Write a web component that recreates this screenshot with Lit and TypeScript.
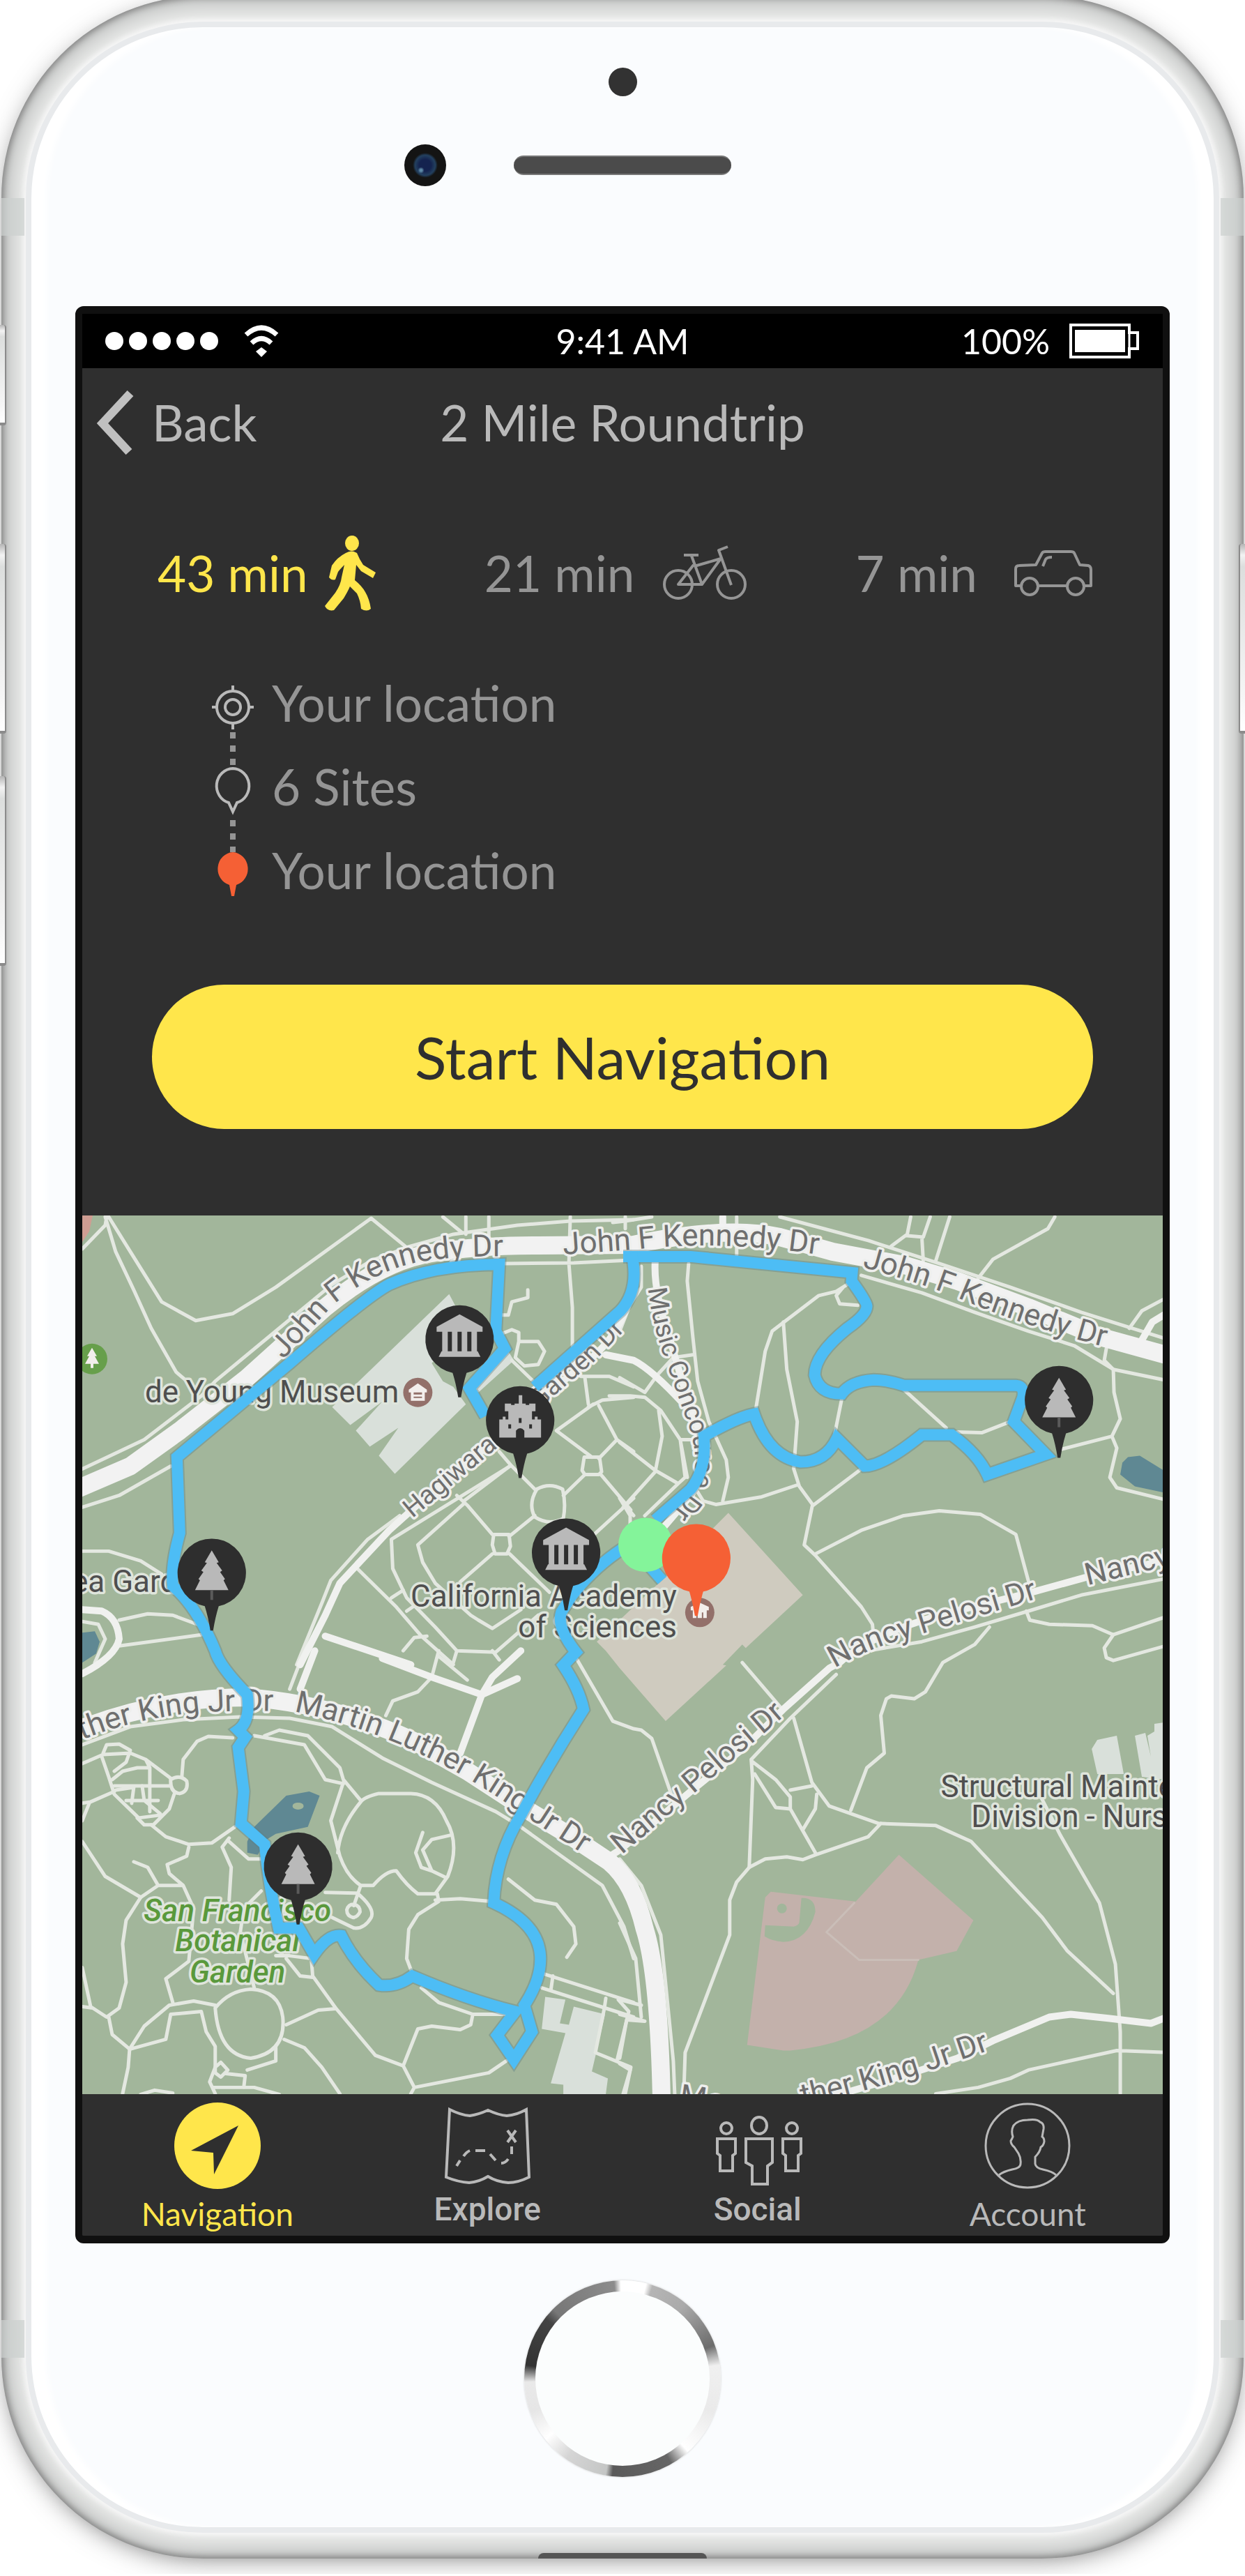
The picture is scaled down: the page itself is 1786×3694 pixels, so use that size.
import { LitElement, html, svg, css } from "lit";
import { customElement, state } from "lit/decorators.js";

/* ---------- map data ----------
 * Map features are digitised on four sheets (A B / C D). A path string names
 * its sheet with @X and may change sheet halfway; plot() converts everything
 * to map units. */
const SHEETS: Record<string, [number, number]> = {
  A: [-8, -15],
  B: [772, -15],
  C: [-8, 625],
  D: [772, 625],
};
const SX = 1.96;
const SY = 2.376;

function at(sheet: string, x: number, y: number): [number, number] {
  const [ox, oy] = SHEETS[sheet];
  return [Math.round(ox + x / SX), Math.round(oy + y / SY)];
}

function plot(source: string): string {
  const tokens = source.match(/@[ABCD]|[MLQCZ]|-?\d+/g) ?? [];
  const out: string[] = [];
  let sheet = "A";
  let pending: number | null = null;
  for (const token of tokens) {
    if (token[0] === "@") sheet = token[1];
    else if (/[MLQCZ]/.test(token)) out.push(token);
    else if (pending === null) pending = Number(token);
    else {
      out.push(at(sheet, pending, Number(token)).join(" "));
      pending = null;
    }
  }
  return out.join(" ");
}

const PATHS = [
  "@A M16 150 80 70 85 40 M80 40 110 160 160 290 210 420 280 570 320 610 M90 40 150 160 240 330 335 395 440 370 560 280 830 45 930 145",
  "@A M1030 40 1085 95 M1095 40 1095 100 M1160 40 1160 110 M1545 40 1545 80",
  "@A M16 900 190 800 350 650 390 600 560 430 720 270 830 190 940 140 1060 100 1240 70 1390 55 1568 50",
  "@A M16 1030 120 990 265 890 M1200 200 1400 197 1560 187 M1390 40 1385 200 1395 350 1395 480",
  "@A M1195 375 1215 375 1225 330 1270 315 1270 290 M1195 440 1225 425 1245 435 1245 465 1300 465 1318 500 1300 545 1260 550 1235 520 1245 465 M1225 530 1290 605",
  "@A M1430 590 1440 680 M1420 585 1500 585 1568 620 M1440 690 1480 665 1568 655 M1455 680 1350 770 1450 860 M1470 685 1520 800 1568 840 M1520 800 1470 865",
  "@A M1428 860 1472 860 1478 910 1470 920 1430 920 1422 905 Z M1430 920 1370 990 M1475 920 1560 1040",
  "@A M1295 970 Q1330 945 1368 970 Q1378 1020 1370 1070 Q1330 1095 1290 1065 Q1270 1020 1295 970 M1190 840 1225 890 1290 970",
  "@A M1220 890 1090 1010 M1070 990 1100 1025 1170 1125 M1175 1125 1218 1125 1222 1165 1212 1190 1178 1190 1170 1160 Z M1218 1130 1290 1060 M1220 1190 1330 1320 M1170 1190 1080 1285",
  "@A M1090 1020 960 1160 975 1220 1010 1290 1110 1400 1130 1415 1170 1445 1250 1380",
  "@A M1220 890 885 1140 890 1240 930 1340 1010 1440 1070 1520 1180 1525 1300 1400",
  "@A M790 1240 900 1370 970 1470 1060 1568 M885 1340 920 1315 M930 1385 960 1360 M920 1520 950 1475 985 1470 M1568 1000 1450 1130 M1540 1020 1568 1060",
  "@A M620 1568 690 1360 715 1280 820 1140 910 1060",
  "@A M16 1180 90 1180 180 1215 240 1260 M120 1415 200 1395 270 1400 340 1430 M120 1505 350 1465 M16 1420 60 1430 80 1480 50 1560",
  "@B M-20 60 15 55 90 40 M450 40 700 120 900 200 1100 280 1300 365 1430 415 1550 460 M680 240 850 300 1000 365 1150 430 1280 480 1390 560 1550 600",
  "@B M330 40 330 170 M820 40 810 100 765 140 M810 105 855 110 875 40 M850 110 855 190 M930 40 890 190 M1225 40 1205 80 1050 185 1010 250",
  "@B M1435 420 1470 360 1550 310 M1370 490 1365 530 1390 560 1392 640 1410 730 1385 790 1400 830 1380 930 1400 965 1550 1010 M1240 835 1385 790",
  "@B M195 200 190 260 205 450 220 600 250 740 300 870 305 930 290 1010 M210 960 235 1010 270 1022 400 995 500 955",
  "@B M640 270 610 295 560 310 430 430 410 500 385 690 M630 280 610 310 620 338 670 342",
  "@B M460 400 470 560 500 740 490 900 505 960 543 1022 520 1160 550 1195 680 1370 712 1430 715 1480",
  "@B M545 1025 680 900 M550 1190 680 1110 800 1060 900 1042 1015 1055 1115 1125 1155 1300 M625 660 605 780 M800 630 920 760 M950 775 1020 778 1100 740",
  "@B M60 210 60 280 30 340 0 430 M0 590 70 640 105 580 150 520 205 510 M-30 650 30 650 70 655 115 700 170 800 190 930 M110 700 120 790 100 910 10 1030 M0 810 100 905 165 950 70 1060 M170 800 185 930 165 950 M170 800 220 800 M0 1000 30 1060 30 1100",
  "@B M1550 1270 1300 1330 1150 1385 1000 1440 850 1490 700 1520 M1145 1385 1155 1415 1210 1430 1330 1435 1390 1465 1550 1400 M1390 1465 1365 1510 1370 1545 1390 1555 1550 1500 M1040 1440 1000 1500 910 1560 @D 860 140 830 165 765 155 750 165 735 220 745 350 695 400 650 545",
  "@C M16 385 75 355 150 350 195 370 265 435 M295 430 300 370 340 310 370 293 440 298 M75 350 85 320 120 318 150 340 140 380 105 410 M70 360 90 430 105 490 175 570 M195 370 205 400 205 550 M100 440 130 410 170 400 200 400 M105 460 265 460 M16 520 40 515 105 480",
  "@C M110 475 160 465 155 520 M140 510 230 510 M185 460 190 510 235 555 M170 570 190 595 215 595 260 540 275 490 M175 570 235 560 M265 440 Q290 420 310 445 Q315 480 290 488 Q262 485 265 440",
  "@C M35 520 16 580 M16 650 80 770 180 840 140 920 130 1000 140 1130 120 1220 85 1250 40 1215 16 1080 M16 1215 45 1220 M90 1250 100 1310 148 1360 145 1420 130 1510",
  "@C M210 595 250 635 315 660 380 655 445 600 M315 670 310 700 255 730 260 760 300 800 330 880 315 1060 250 1120 270 1200 M160 720 200 740 230 800 180 840 M230 800 295 800",
  "@C M430 640 410 670 435 740 430 850 M430 650 485 710 520 710 M520 820 470 880 460 960 500 1150",
  "@C M390 1220 Q430 1160 490 1155 Q570 1160 580 1250 Q590 1370 490 1390 Q400 1380 390 1220 M148 1360 190 1280 260 1210 330 1195 390 1210 M150 1360 250 1325 265 1240 350 1230 365 1300 390 1350 390 1420 375 1470 390 1510",
  "@C M560 1350 560 1400 480 1430 M390 1420 405 1405 425 1430 405 1455 390 1440 Z M420 1442 475 1450 470 1490 M385 1490 500 1490 570 1513 M585 1325 640 1355 690 1420 740 1510 M590 1275 680 1225 730 1222 M180 1513 220 1500 270 1508",
  "@C M560 1040 600 1040 660 1050 665 1110 730 1220 840 1380 920 1415 950 1490 940 1510 M590 1050 630 1110 665 1115 M950 1490 1160 1440 1210 1400 M920 1415 960 1290 1000 1280 1080 1292 1110 1275 1115 1240 M970 1150 1020 1200 1115 1240 1210 1240",
  "@C M16 320 150 260 300 235 460 225 600 230 720 260 860 365 1000 450 1180 550 1250 600 1480 800 1540 940 1568 1050",
  "@C M500 290 640 320 700 440 750 455 M530 290 570 270 650 290 740 400 750 440 800 510 M750 450 715 580 740 700 Q760 770 800 800 L835 800 Q870 750 900 750 Q930 800 960 830 L1010 830 1045 770 Q1080 660 1040 580 Q1010 490 940 487 L850 487 Q810 500 800 515 Q740 600 735 690",
  "@C M800 800 780 870 M760 885 Q765 865 780 865 Q797 870 797 890 Q790 910 778 910 Q760 905 760 885 M700 825 790 828 Q840 880 830 910 Q810 950 780 945 L720 910",
  "@C M1050 630 1000 645 975 680 1000 750 1040 775 M975 620 955 690 970 740 1000 750",
  "@C M1015 830 1020 855 960 900 935 950 930 1050 945 1100 M1010 850 1080 845 1170 855 M1215 780 1290 850 1350 865 1400 940 1405 1000 1380 1045",
  "@C M1310 1100 1568 1200 M1310 1150 1568 1250 M1340 1110 1335 1160 M1490 1185 1485 1220 1460 1370 1560 1420 1545 1510 M1525 1190 1555 1230 1520 1400",
  "@C M600 130 640 0 M870 220 890 170 960 140 1000 90 1020 0 M1020 20 1100 100 M1060 40 1070 0 M1170 0 1190 30",
  "@C M1410 30 1510 240 1568 265 @D 60 270 90 300 145 490",
  "@D M345 40 450 190 M610 80 480 230 370 370 M490 230 540 450 590 530 730 590 890 597 990 650 1190 910 1260 1025 1390 1170",
  "@D M370 375 375 440 365 740 M370 375 440 440 480 500 480 540 550 690 M380 420 440 535 480 540 M480 475 540 460 M555 490 550 540 515 610",
  "@D M735 590 700 635 550 695 515 712 470 703 410 710 365 740 330 790 310 850 310 970 185 1370 180 1510",
  "@D M1185 500 1240 630 1350 860 1395 1070 1410 1300 1410 1510 M890 1510 1010 1490 1100 1460 1150 1430 1400 1365 1550 1372",
  "@D M0 710 60 800 115 970 150 1400 155 1510 M0 930 45 1050 60 1250 M0 1190 60 1210 M0 1240 70 1265 20 1260 0 1390 M0 1410 30 1430 10 1510",
].map(plot);

const STREETS = [
  "@A M630 1568 700 1400 740 1290 880 1110 1000 980 1200 780 1330 640 1450 520 Q1568 400 1568 190",
  "@B M100 190 Q95 290 140 450 L180 620 220 760 Q255 900 200 990 L110 1120",
  "@A M1490 510 1568 530 @B Q90 560 180 680",
  "@B M1550 1210 1310 1270 1160 1320 900 1400 Q700 1470 620 1560 @D L590 60 460 200 350 330 200 480 80 600 0 680 @C L1490 710",
  "@D M600 1520 800 1450 950 1390 1050 1330 1210 1250 1270 1240 1380 1255 1495 1270 1540 1250",
  "@A M700 1470 940 1568 @C M860 25 1000 90 1140 150 1240 95 M1250 0 1170 90 1140 150 1080 350 M630 130 670 0",
  "@A M16 1380 70 1385 Q115 1410 120 1480 Q110 1540 16 1600",
  "@B M290 40 290 90 M1470 460 1500 400 1550 360",
].map(plot);

const DRIVES = [
  "@A M0 970 150 890 290 770 480 590 700 350 Q860 190 1000 165 Q1120 138 1300 137 L1568 135 @B Q300 70 450 110 L600 160 800 205 950 260 1150 350 1350 450 1550 515",
  "@C M0 270 Q240 160 480 160 Q720 180 950 310 L1100 410 1250 530 1400 640 1500 720 Q1568 790 @D 70 950 Q110 1100 118 1520",
].map(plot);

const PAVILIONS = [
  "@A M1048 305 720 690 770 750 860 670 785 770 825 825 905 760 850 855 895 918 1095 680 1060 620 1030 600 1000 540 1100 420 Z M1110 620 1215 500 1230 530 1130 640 Z",
  "@C M1320 1180 1375 1190 1360 1270 1385 1275 1400 1215 1487 1240 1450 1435 1495 1460 1490 1513 1370 1513 1370 1480 1335 1475 1375 1305 1310 1290 Z",
  "@D M1345 305 1400 290 1420 420 1345 420 1328 335 Z M1450 290 1480 280 1495 360 1485 290 1505 275 1505 250 1530 245 1530 440 1470 430 Z",
].map(plot);

const WATER = [
  "@A M16 1460 50 1455 65 1490 55 1530 16 1560 Z",
  "@B M1415 880 1430 860 1465 855 1550 920 1550 985 1450 960 1410 920 Z",
  "@C M480 690 480 650 500 600 590 495 655 480 685 495 650 600 560 625 535 645 510 695 Z",
].map(plot);

const ACADEMY = plot(
  "@B M305 1050 515 1330 355 1510 345 1500 290 1568 @D L300 50 130 240 0 60 @C L1490 0 @A L1465 1490 @B L110 1290 Z",
);
const FIELD = plot(
  "@D M425 822 665 855 785 695 995 920 948 1025 840 1055 Q780 1330 480 1365 L460 1365 358 1345 410 840 Z",
);
const INFIELD = plot("@D M512 843 Q550 840 550 890 Q530 990 460 993 Q430 990 408 975 L410 935 490 942 Q505 935 505 925 Z");
const FIELD_EDGE = plot("@D M660 860 583 960 675 1055 840 1055");

const ROUTE = [
  "@B M10 175 L200 177 655 230 652 260 Q695 330 695 345 Q695 375 640 420 Q548 510 548 580 Q560 645 625 645 Q650 600 715 597 Q750 597 800 615 L1115 615 Q1140 618 1135 655 L1110 740 1200 850 1035 920 Q1010 850 935 783 L850 783 Q740 890 690 890 L612 795 Q580 877 510 877 Q420 860 378 712 Q330 725 238 790 Q245 900 200 970 L100 1075",
  "@A M1562 165 Q1585 290 1530 360 L1290 620",
  "@A M1150 720 1105 625 1205 490 1180 430 1190 202 Q1000 205 880 270 Q820 310 600 540 L283 860 290 1120 Q265 1230 270 1300 Q340 1370 390 1520 @C Q400 50 480 150 Q490 240 455 270 L475 295 455 330 470 480 463 590 530 660 Q540 800 568 945 L625 945 668 1035 Q710 965 745 972 Q780 1060 850 1140 Q900 1150 945 1110 Q1100 1190 1235 1230 L1183 1312 1230 1395 1282 1300 1260 1210 Q1310 1120 1305 1040 Q1300 930 1175 860 Q1180 700 1250 560 Q1330 380 1427 200 Q1415 130 1370 50 L1405 5 @A Q1350 1440 1365 1390 L1390 1340 Q1450 1240 1540 1170",
  "@B M60 1200 120 1280",
].map(plot);

interface RoadLabel {
  id: string;
  text: string;
  line: string;
  small?: boolean;
}
const ROAD_LABELS: RoadLabel[] = [
  { id: "jfk-west", text: "John F Kennedy Dr", line: "@A M583 528 720 345 Q850 210 1000 187 Q1100 170 1260 176" },
  { id: "jfk-mid", text: "John F Kennedy Dr", line: "@A M1370 168 Q1480 160 1568 152 @B Q300 115 620 180" },
  { id: "jfk-east", text: "John F Kennedy Dr", line: "@B M682 212 Q860 270 960 320 Q1150 420 1450 510" },
  { id: "music", text: "Music Concourse Dr", line: "@B M80 285 Q90 400 125 520 L190 740 Q225 850 205 960 L120 1100", small: true },
  { id: "hagiwara", text: "Hagiwara Tea Garden Dr", line: "@A M945 1070 L1200 812 1350 645 1460 530 1620 330", small: true },
  { id: "mlk", text: "Martin Luther King Jr Dr", line: "@C M612 207 Q820 260 1000 370 Q1120 440 1270 570 L1500 750" },
  { id: "mlk-west", text: "ther King Jr Dr", line: "@C M16 305 Q150 235 330 212 Q450 203 600 207" },
  { id: "pelosi-a", text: "Nancy Pelosi Dr", line: "@D M5 695 L190 505 520 165" },
  { id: "pelosi-b", text: "Nancy Pelosi Dr", line: "@B M605 1580 Q700 1510 830 1470 L1220 1325" },
  { id: "pelosi-c", text: "Nancy", line: "@B M1318 1298 1600 1215" },
  { id: "mlk-south", text: "ther King Jr Dr", line: "@D M515 1552 Q710 1500 870 1432 L1120 1330" },
  { id: "mlk-end", text: "Ma", line: "@D M165 1552 Q240 1560 300 1585" },
].map((label) => ({ ...label, line: plot(label.line) }));

const PLACES = [
  { text: "de Young Museum", pos: at("A", 192, 672), anchor: "start", park: false },
  { text: "ea Gard", pos: at("A", -14, 1322), anchor: "start", park: false },
  { text: "California Academy", pos: at("B", 160, 1370), anchor: "end", park: false },
  { text: "of Sciences", pos: at("B", 160, 1475), anchor: "end", park: false },
  { text: "Structural Mainte", pos: at("D", 903, 498), anchor: "start", park: false },
  { text: "Division - Nurs", pos: at("D", 990, 600), anchor: "start", park: false },
  { text: "San Francisco", pos: at("C", 453, 922), anchor: "middle", park: true },
  { text: "Botanical", pos: at("C", 453, 1024), anchor: "middle", park: true },
  { text: "Garden", pos: at("C", 453, 1130), anchor: "middle", park: true },
];

type PinKind = "museum" | "castle" | "tree";
const PINS: { kind: PinKind; pos: [number, number] }[] = [
  { kind: "museum", pos: at("A", 1078, 458) },
  { kind: "castle", pos: at("A", 1248, 735) },
  { kind: "tree", pos: at("A", 380, 1255) },
  { kind: "museum", pos: at("A", 1378, 1185) },
  { kind: "tree", pos: at("C", 623, 737) },
  { kind: "tree", pos: at("B", 1237, 665) },
];

const GLYPHS = {
  museum: svg`<path d="M0-36 33-18V-11H-33V-18ZM-25-11H-17V17H-25ZM-11-11H-3V17H-11ZM3-11H11V17H3ZM17-11H25V17H17ZM-26 17H26L30 25H-30Z"/>`,
  castle: svg`<path d="M-2-36H3V-24H8V-22H13V-24H22V-13H17V-1H21V-5H25V-1H30V25H6V15Q0 8-6 15V25H-30V-1H-25V-5H-21V-1H-17V-13H-22V-24H-13V-22H-8V-24H-2Z"/><path class="slot" d="M-2-3H2V4H-2ZM-17 6H-13V12H-17ZM13 6H17V12H13Z"/>`,
  tree: svg`<path d="M0-32 10-15 7-14 15-3 12-1 19 9 17 11 24 25H-24L-17 11-19 9-12-1-15-3-7-14-10-15Z"/><path class="trunk" d="M-2 25H2V39H-2Z"/>`,
};

const PIN_SHAPE = "M0-49A49 49 0 0 1 10 48Q5 64 2 83H-2Q-5 64-10 48A49 49 0 0 1 0-49Z";

@customElement("trip-map")
export class TripMap extends LitElement {
  static styles = css`
    :host {
      display: block;
    }
    .map {
      display: block;
      width: 100%;
      height: auto;
      background: #a2b69b;
    }
    .line {
      fill: none;
      stroke-linejoin: round;
      stroke-linecap: round;
    }
    .path {
      stroke: #e4e8e1;
      stroke-width: 5;
    }
    .street {
      stroke: #f0f1ef;
      stroke-width: 10;
    }
    .drive {
      stroke: #f2f2f2;
      stroke-width: 26;
    }
    .pavilion {
      fill: #d9e0da;
    }
    .water {
      fill: #5f8893;
    }
    .academy {
      fill: #cfcbbf;
    }
    .field {
      fill: #c3b1ab;
    }
    .grass {
      fill: #a2b69b;
    }
    .field-edge {
      stroke: #cabeb8;
      stroke-width: 3;
    }
    .clay {
      fill: #cf9d92;
    }
    .route-shade {
      stroke: #5b7f86;
      stroke-opacity: 0.4;
      stroke-width: 20;
      stroke-linejoin: miter;
      stroke-linecap: butt;
    }
    .route {
      stroke: #4dbdf5;
      stroke-width: 16;
      stroke-linejoin: miter;
      stroke-linecap: butt;
    }
    text {
      font-family: Roboto, "Liberation Sans", sans-serif;
      font-size: 44px;
      paint-order: stroke;
      stroke: #dfe5dc;
      stroke-width: 7px;
      stroke-linejoin: round;
    }
    .road {
      fill: #6f6f6f;
      stroke: #eeefed;
    }
    .road.small {
      font-size: 38px;
    }
    .place {
      fill: #4f4f4f;
    }
    .place.park {
      fill: #5a993c;
      font-style: italic;
      font-weight: 500;
    }
    .badge {
      fill: #93706a;
    }
    .badge-mark {
      fill: #f3eeec;
    }
    .tree-badge {
      fill: #679f4b;
    }
    .pin {
      fill: #2e2e2e;
    }
    .glyph {
      fill: #b9b9b9;
    }
    .slot {
      fill: #2e2e2e;
    }
    .trunk {
      fill: #5a5a5a;
    }
    .start {
      fill: #84f49a;
    }
    .end {
      fill: #f56035;
    }
  `;

  render() {
    const [gx, gy] = at("B", 72, 1160);
    const [ox, oy] = at("B", 215, 1205);
    const [mx, my] = at("A", 960, 638);
    const [ax, ay] = at("B", 225, 1390);
    const [tx, ty] = at("A", 43, 525);
    const [ix, iy] = at("C", 624, 530);
    const [hx, hy] = at("D", 457, 878);
    return html`
      <svg class="map" viewBox="0 0 1552 1262" role="img" aria-label="Route map of Golden Gate Park">
        <defs>
          ${ROAD_LABELS.map((l) => svg`<path id=${l.id} d=${l.line}></path>`)}
        </defs>
        <path class="clay" d=${plot("@A M16 36 45 36 35 90 16 125 Z")}></path>
        ${PAVILIONS.map((d) => svg`<path class="pavilion" d=${d}></path>`)}
        ${WATER.map((d) => svg`<path class="water" d=${d}></path>`)}
        <ellipse class="grass" cx=${ix} cy=${iy} rx="8" ry="5"></ellipse>
        <path class="field" d=${FIELD}></path>
        <path class="grass" d=${INFIELD}></path>
        <circle class="grass" cx=${hx} cy=${hy} r="7"></circle>
        <path class="line field-edge" d=${FIELD_EDGE}></path>
        ${PATHS.map((d) => svg`<path class="line path" d=${d}></path>`)}
        ${STREETS.map((d) => svg`<path class="line street" d=${d}></path>`)}
        ${DRIVES.map((d) => svg`<path class="line drive" d=${d}></path>`)}
        <path class="academy" d=${ACADEMY}></path>
        ${ROAD_LABELS.map(
          (l) => svg`<text class=${l.small ? "road small" : "road"}><textPath href=${"#" + l.id}>${l.text}</textPath></text>`,
        )}
        ${PLACES.map(
          (p) => svg`<text class=${p.park ? "place park" : "place"} x=${p.pos[0]} y=${p.pos[1]} text-anchor=${p.anchor}>${p.text}</text>`,
        )}
        <g transform="translate(${mx} ${my})">
          <circle class="badge" r="21"></circle>
          <path class="badge-mark" d="M0-13 13-4V0H10V12H-10V0H-13V-4ZM-6 0V3H6V0ZM-6 6V8H6V6Z"></path>
        </g>
        <g transform="translate(${ax} ${ay})">
          <circle class="badge" r="21"></circle>
          <path class="badge-mark" d="M-13-8 0-14 13-8V-3H10V8H5V0H3V8H-3V0H-5V8H-10V-3H-13Z"></path>
        </g>
        <g transform="translate(${tx} ${ty})">
          <circle class="tree-badge" r="22"></circle>
          <path class="badge-mark" d="M0-16 7-4H4L10 7H2V13H-2V7H-10L-4-4H-7Z"></path>
        </g>
        ${ROUTE.map((d) => svg`<path class="line route-shade" d=${d}></path>`)}
        ${ROUTE.map((d) => svg`<path class="line route" d=${d}></path>`)}
        <circle class="start" cx=${gx} cy=${gy} r="39"></circle>
        <path class="end" transform="translate(${ox} ${oy})" d=${PIN_SHAPE}></path>
        ${PINS.map(
          (p) => svg`<g transform="translate(${p.pos[0]} ${p.pos[1]})"><path class="pin" d=${PIN_SHAPE}></path><g class="glyph">${GLYPHS[p.kind]}</g></g>`,
        )}
      </svg>
    `;
  }
}

const MODE_ICONS = {
  walk: html`<svg viewBox="0 0 74 112" width="74" height="112" aria-hidden="true">
    <g fill="currentColor">
      <ellipse cx="39" cy="13" rx="10" ry="11"></ellipse>
      <path
        d="M30 27Q38 22 46 27Q50 37 55 44L73 55 69 63 52 53 45 44 43 66Q53 74 58 83Q64 93 66 107Q60 112 52 107Q51 95 46 85L36 75Q33 82 27 92L13 109Q4 111 0 103L15 84Q23 72 24 62L28 44Q22 50 19 54L15 65Q10 67 6 62L10 45Q18 33 30 27Z"
      ></path>
    </g>
  </svg>`,
  bike: html`<svg viewBox="0 0 122 80" width="122" height="80" aria-hidden="true">
    <g fill="none" stroke="currentColor" stroke-width="4" stroke-linejoin="round">
      <circle cx="23" cy="56" r="20"></circle>
      <circle cx="99" cy="56" r="20"></circle>
      <path d="M42 15 57 56H23L45 28M46 30 84 19 57 56M99 57 81 7 94 2M31 14H52"></path>
    </g>
  </svg>`,
  car: html`<svg viewBox="0 0 114 68" width="114" height="68" aria-hidden="true">
    <g fill="none" stroke="currentColor" stroke-width="4" stroke-linejoin="round">
      <path d="M10 52H3V28Q3 23 8 23L32 22 41 5Q42 3 46 3H82Q86 3 87 5L95 22 107 23Q111 24 111 29V52H102M36 52H76M42 24 46 14Q48 11 55 11"></path>
      <circle cx="23" cy="53" r="12"></circle>
      <circle cx="89" cy="53" r="12"></circle>
    </g>
  </svg>`,
};

const TAB_ICONS = {
  navigation: html`<svg viewBox="0 0 124 124" width="124" height="124" aria-hidden="true">
    <circle cx="62" cy="62" r="62" fill="#ffe64b"></circle>
    <path d="M92 33 57 103 56 72 24 69Z" fill="#2f2f2f"></path>
  </svg>`,
  explore: html`<svg viewBox="0 0 124 118" width="124" height="118" aria-hidden="true">
    <g fill="none" stroke="currentColor" stroke-width="4">
      <path d="M8 10Q24 18 37 19Q50 17 63 11Q78 18 90 19Q104 18 118 10L122 107Q106 115 92 115Q76 114 63 106Q50 114 36 115Q20 114 3 107Z"></path>
      <path d="M18 91 23 83M28 77Q32 71 37 69M45 69H59M66 74 74 83M82 87Q88 87 92 81M97 74V63M91 40 103 57M103 40 91 57"></path>
    </g>
  </svg>`,
  social: html`<svg class="spill" viewBox="0 0 124 118" width="124" height="118" aria-hidden="true">
    <g fill="none" stroke="currentColor" stroke-width="4">
      <ellipse cx="64" cy="33" rx="11" ry="12"></ellipse>
      <circle cx="17" cy="37" r="8"></circle>
      <circle cx="111" cy="37" r="8"></circle>
      <path d="M45 52H83V86L76 91V117H54V91L45 86ZM4 52H30V73L26 76V98H8V76L4 73ZM98 52H124V73L120 76V98H102V76L98 73Z"></path>
    </g>
  </svg>`,
  account: html`<svg viewBox="0 0 124 124" width="124" height="124" aria-hidden="true">
    <g fill="none" stroke="currentColor" stroke-width="3">
      <circle cx="62" cy="62" r="60"></circle>
      <path
        d="M21 104Q27 99 40 96Q52 94 52 88Q53 80 49 73L43 64Q38 60 38 55Q40 52 41 49Q38 40 42 33Q48 25 62 25Q76 23 80 28Q86 30 85 38L83 49Q86 51 86 56Q85 62 81 64Q80 71 73 78V88Q74 94 84 96Q98 99 103 104"
      ></path>
    </g>
  </svg>`,
};

@customElement("app-root")
export class AppRoot extends LitElement {
  @state() private mode = "walk";
  @state() private tab = "navigation";

  private modes: { id: keyof typeof MODE_ICONS; label: string }[] = [
    { id: "walk", label: "43 min" },
    { id: "bike", label: "21 min" },
    { id: "car", label: "7 min" },
  ];

  private tabs: { id: keyof typeof TAB_ICONS; label: string; alt: boolean }[] = [
    { id: "navigation", label: "Navigation", alt: false },
    { id: "explore", label: "Explore", alt: true },
    { id: "social", label: "Social", alt: true },
    { id: "account", label: "Account", alt: false },
  ];

  static styles = css`
    :host {
      display: block;
      overflow: hidden;
      padding-bottom: 22px;
      background: #fff;
      font-family: Lato, "Liberation Sans", sans-serif;
      color: #b9b9b9;
    }
    * {
      box-sizing: border-box;
    }
    button,
    a {
      font: inherit;
      color: inherit;
      background: none;
      border: 0;
      padding: 0;
      text-decoration: none;
      cursor: pointer;
    }
    svg {
      display: block;
      flex: none;
    }
    .spill {
      overflow: visible;
    }

    .device {
      position: relative;
      margin: -6px 2px 0;
      padding: 37px 35px;
      border-radius: 290px;
      background: #ecedec;
      box-shadow:
        inset 0 0 8px 3px #868686,
        inset 0 0 36px 8px #a9abaa,
        0 8px 40px -14px #555;
    }
    .face {
      border: 8px solid #e8eaec;
      border-radius: 254px;
      background: #fafcfe;
      box-shadow:
        0 0 6px 4px #f6f6f6,
        inset 24px 0 10px -2px #fff,
        inset -24px 0 10px -2px #fff;
    }
    .side,
    .band,
    .port {
      position: absolute;
    }
    .side {
      left: -2px;
      width: 9px;
      height: 272px;
      border-right: 2px solid #8b8b8b;
      border-bottom: 4px solid #8b8b8b;
      border-radius: 0 4px 4px 0;
      background: linear-gradient(#b5b5b5, #f3f3f3 6%, #dcdedd 12%, #f5f5f5 80%, #fff);
    }
    .mute {
      top: 472px;
      height: 144px;
    }
    .up {
      top: 786px;
    }
    .down {
      top: 1119px;
    }
    .power {
      top: 786px;
      left: auto;
      right: -2px;
      transform: scaleX(-1);
    }
    .band {
      width: 33px;
      height: 54px;
      background: #ccd0cf;
      opacity: 0.7;
    }
    .band.left {
      left: 0;
    }
    .band.right {
      right: 0;
    }
    .band.top {
      top: 290px;
    }
    .band.bottom {
      bottom: 288px;
    }
    .port {
      left: 50%;
      bottom: 0;
      width: 242px;
      height: 8px;
      margin-left: -121px;
      background: #555;
      border-radius: 12px 12px 0 0;
    }

    .sensors {
      display: grid;
      grid-template-columns: 1fr auto 1fr;
      align-items: center;
      row-gap: 69px;
      padding: 58px 0 172px;
    }
    .proximity {
      grid-column: 2;
      justify-self: center;
      width: 41px;
      height: 41px;
      border-radius: 50%;
      background: #323232;
    }
    .camera {
      grid-column: 1;
      justify-self: end;
      width: 60px;
      height: 60px;
      margin-right: 97px;
      border-radius: 50%;
      background: radial-gradient(circle at 40% 62%, #5d8aa6 0 3%, transparent 9%),
        radial-gradient(circle, #14234f 0 20%, #23405f 34%, #141414 42%);
    }
    .speaker {
      width: 312px;
      height: 28px;
      border: 2px solid #777;
      border-width: 2px 0;
      border-radius: 14px;
      background: #4b4b4b;
    }

    .screen {
      margin: 0 63px;
      border: 11px solid #101010;
      border-width: 11px 10px;
      border-radius: 12px;
      background: #2f2f2f;
    }
    .status {
      display: grid;
      grid-template-columns: 1fr auto 1fr;
      align-items: center;
      height: 78px;
      padding: 0 32px;
      background: #000;
      color: #fff;
      font-size: 50px;
      line-height: 60px;
    }
    .signal,
    .power-level {
      display: flex;
      align-items: center;
    }
    .signal {
      gap: 36px;
    }
    .power-level {
      justify-content: flex-end;
      gap: 28px;
    }

    .panel {
      padding: 32px 100px 124px;
    }
    .topbar {
      display: grid;
      grid-template-columns: 1fr auto 1fr;
      align-items: center;
      margin: 0 -80px;
      font-size: 71px;
      line-height: 84px;
    }
    .back {
      display: flex;
      align-items: center;
      justify-self: start;
      gap: 24px;
    }
    h1 {
      margin: 0;
      font: inherit;
    }
    .modes {
      display: flex;
      justify-content: space-between;
      align-items: center;
      padding: 0 0 0 8px;
      margin-top: 114px;
      font-size: 71px;
      line-height: 84px;
      color: #959595;
    }
    .mode {
      display: flex;
      align-items: center;
      gap: 24px;
    }
    .mode.bike {
      gap: 40px;
    }
    .mode.car {
      gap: 52px;
    }
    .mode[aria-pressed="true"] {
      color: #ffe64b;
    }
    .stops {
      display: flex;
      gap: 24px;
      margin-top: 70px;
      padding-left: 84px;
      font-size: 71px;
      line-height: 120px;
      color: #959595;
    }
    ol {
      margin: 0;
      padding: 0;
      list-style: none;
    }
    .go {
      display: block;
      width: 100%;
      height: 207px;
      margin-top: 104px;
      border-radius: 104px;
      background: #ffe64b;
      color: #2f2f2f;
      font-size: 84px;
      line-height: 100px;
    }

    .tabs {
      display: grid;
      grid-template-columns: repeat(4, 1fr);
      height: 203px;
      padding-top: 12px;
    }
    .tab {
      display: flex;
      flex-direction: column;
      align-items: center;
      gap: 8px;
      font-size: 46px;
      line-height: 55px;
    }
    .tab.alt {
      font-family: Roboto, "Liberation Sans", sans-serif;
      font-weight: 500;
    }
    .tab[aria-current="page"] {
      color: #ffe64b;
    }

    .home {
      display: block;
      width: 282px;
      height: 282px;
      margin: 53px auto 72px;
      padding: 16px;
      border-radius: 50%;
      background: conic-gradient(
        #fff 0deg 14deg,
        #b5b5b5 18deg,
        #aaa 40deg,
        #6c6c6c 70deg,
        #f0f0f0 82deg,
        #eaeaea 110deg,
        #fff 138deg,
        #666 150deg,
        #5a5a5a 186deg,
        #c4c6c5 190deg,
        #d5d5d5 215deg,
        #fff 232deg,
        #e6e6e6 250deg,
        #e9e9e9 268deg,
        #333 278deg,
        #444 308deg,
        #777 315deg,
        #8c8c8c 355deg,
        #fff 359deg
      );
      box-shadow: 0 0 3px #ccc;
    }
    .home-face {
      display: block;
      height: 100%;
      border-radius: 50%;
      background: #fbfdfd;
    }
  `;

  render() {
    return html`
      <div class="device">
        <span class="band left top"></span><span class="band right top"></span>
        <span class="band left bottom"></span><span class="band right bottom"></span>
        <span class="side mute"></span><span class="side up"></span>
        <span class="side down"></span><span class="side power"></span>
        <span class="port"></span>
        <div class="face">
          <div class="sensors">
            <span class="proximity"></span>
            <span class="camera"></span>
            <span class="speaker"></span>
          </div>
          <main class="screen">
            <div class="status">
              <div class="signal">
                <svg viewBox="0 0 164 28" width="164" height="28" role="img" aria-label="Signal">
                  <g fill="#fff">${[14, 48, 82, 116, 150].map((x) => svg`<circle cx=${x} cy="14" r="13"></circle>`)}</g>
                </svg>
                <svg viewBox="0 0 50 46" width="50" height="46" role="img" aria-label="Wi-Fi">
                  <g fill="none" stroke="#fff" stroke-width="7">
                    <path d="M3 14Q25-6 47 14M11 26Q25 13 39 26"></path>
                  </g>
                  <path d="M25 32 33 38 25 46 17 38Z" fill="#fff"></path>
                </svg>
              </div>
              <span>9:41 AM</span>
              <div class="power-level">
                <span>100%</span>
                <svg viewBox="0 0 102 52" width="102" height="52" role="img" aria-label="Battery full">
                  <path d="M2 3H86V14H98V37H86V49H2Z" fill="none" stroke="#fff" stroke-width="4"></path>
                  <path d="M86 14V37" stroke="#fff" stroke-width="3"></path>
                  <path d="M8 10H80V42H8Z" fill="#fff"></path>
                </svg>
              </div>
            </div>
            <section class="panel">
              <header class="topbar">
                <button class="back">
                  <svg viewBox="0 0 56 92" width="56" height="92" aria-hidden="true">
                    <path d="M49 4 9 47 47 88" fill="none" stroke="#c0c0c0" stroke-width="12"></path>
                  </svg>
                  Back
                </button>
                <h1>2 Mile Roundtrip</h1>
              </header>
              <div class="modes">
                ${this.modes.map(
                  (m) => html`<button
                    class="mode ${m.id}"
                    aria-pressed=${this.mode === m.id ? "true" : "false"}
                    @click=${() => (this.mode = m.id)}
                  >
                    ${m.label}${MODE_ICONS[m.id]}
                  </button>`,
                )}
              </div>
              <div class="stops">
                <svg viewBox="0 0 64 360" width="64" height="360" aria-hidden="true">
                  <g fill="none" stroke="#b9b9b9" stroke-width="4">
                    <circle cx="32" cy="66" r="23"></circle>
                    <circle cx="32" cy="66" r="11"></circle>
                    <path d="M32 35V44M32 88V98M2 66H10M54 66H62"></path>
                    <path d="M32 154A24 25 0 0 1 38 203L32 216 26 203A24 25 0 0 1 32 154Z"></path>
                  </g>
                  <path d="M32 102V154M32 228V274" stroke="#959595" stroke-width="8" stroke-dasharray="9 10" fill="none"></path>
                  <path d="M32 274A23 24 0 0 1 37 321L34 337H30L27 321A23 24 0 0 1 32 274Z" fill="#f56035"></path>
                </svg>
                <ol>
                  <li>Your location</li>
                  <li>6 Sites</li>
                  <li>Your location</li>
                </ol>
              </div>
              <button class="go">Start Navigation</button>
            </section>
            <trip-map></trip-map>
            <nav class="tabs">
              ${this.tabs.map(
                (t) => html`<a
                  class="tab ${t.alt ? "alt" : ""}"
                  href="#${t.id}"
                  aria-current=${this.tab === t.id ? "page" : "false"}
                  @click=${() => (this.tab = t.id)}
                  >${TAB_ICONS[t.id]}<span>${t.label}</span></a
                >`,
              )}
            </nav>
          </main>
          <button class="home" aria-label="Home"><span class="home-face"></span></button>
        </div>
      </div>
    `;
  }
}
